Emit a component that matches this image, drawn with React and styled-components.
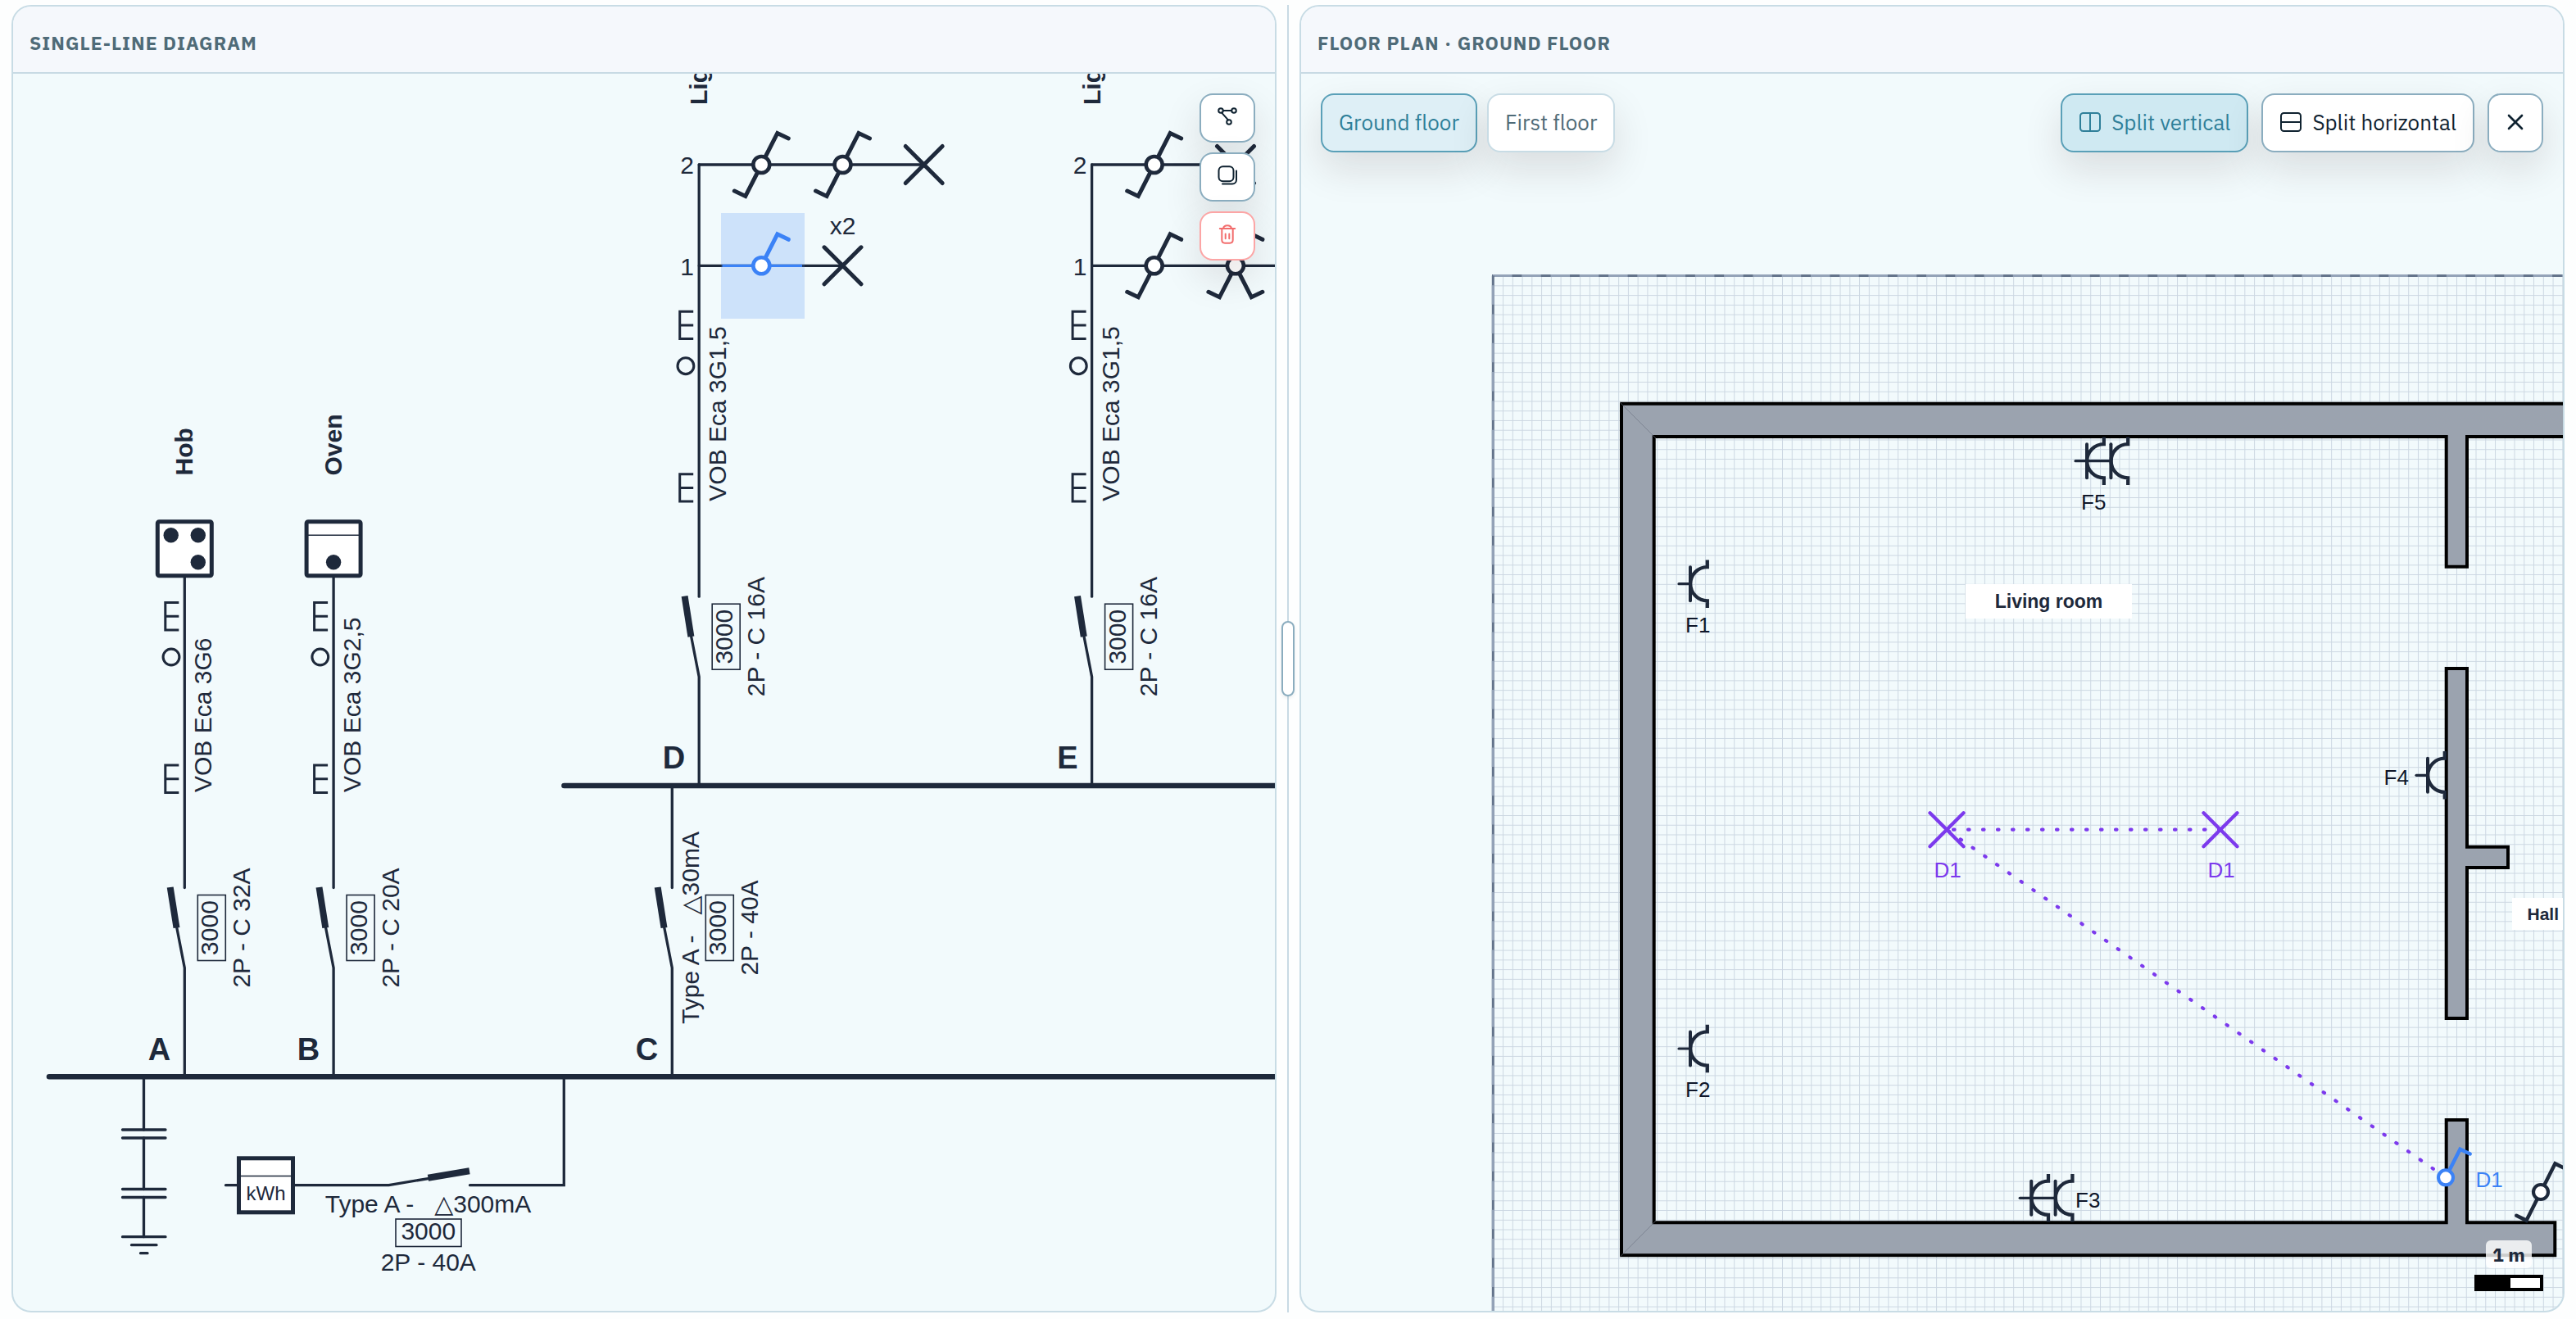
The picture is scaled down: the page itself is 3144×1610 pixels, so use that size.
import React, { useState } from 'react';
import styled, { createGlobalStyle, css } from 'styled-components';
import { X } from 'lucide-react';

const INK = '#1e293b';
const BLUE = '#3b82f6';
const VIOLET = '#7c3aed';

const GlobalStyle = createGlobalStyle`
  * {
    box-sizing: border-box;
  }
  body {
    margin: 0;
    background: #fdfefe;
    font-family: "IBM Plex Sans", Roboto, "Noto Sans", sans-serif;
    color: #0f2230;
  }
`;

/* ---------- single-line diagram symbols ---------- */

const Switch = ({ x, y, arms = ['ur', 'dl'], color = INK, scale = 1 }) => {
  const flip = { ur: '1 1', ul: '-1 1', dr: '1 -1', dl: '-1 -1' };
  return (
    <g transform={`translate(${x} ${y}) scale(${scale})`} stroke={color} strokeWidth="5" fill="none" strokeLinecap="round">
      {arms.map((arm) => (
        <path key={arm} d="M4.5 -9 L19.5 -38.5 L33 -32" transform={`scale(${flip[arm]})`} />
      ))}
      <circle r="10" fill="#fff" strokeWidth="4.6" />
    </g>
  );
};

const Lamp = ({ x, y, size = 22.5, color = INK, width = 5 }) => (
  <path
    d={`M${x - size} ${y - size} L${x + size} ${y + size} M${x + size} ${y - size} L${x - size} ${y + size}`}
    stroke={color}
    strokeWidth={width}
    strokeLinecap="round"
    fill="none"
  />
);

// x is the conductor, y the bus bar the circuit starts from
const Breaker = ({ x, y, rating, differential }) => {
  const shift = differential ? 25 : 0;
  const mid = y - 181.5;
  return (
    <g>
      <Wire d={`M${x} ${y} V${y - 132.5} L${x - 9.5} ${mid}`} />
      <Blade d={`M${x - 9.8} ${mid} L${x - 17.6} ${y - 231}`} />
      {differential && (
        <Label transform={`translate(${x + 33} ${mid}) rotate(-90)`} textAnchor="middle">
          {`Type A -\u00a0\u00a0\u00a0`}<Delta>△</Delta>{differential}
        </Label>
      )}
      <ThinRect x={x + 16 + shift} y={mid - 40} width="34" height="80" />
      <Label transform={`translate(${x + 41 + shift} ${mid}) rotate(-90)`} textAnchor="middle">3000</Label>
      <Label transform={`translate(${x + 79.5 + shift} ${mid}) rotate(-90)`} textAnchor="middle">{rating}</Label>
    </g>
  );
};

const WallMark = ({ x, y }) => (
  <path d={`M${x} ${y} H${x - 16.5} V${y + 33.4} H${x} M${x - 16.5} ${y + 16.7} H${x}`} stroke={INK} strokeWidth="3" fill="none" />
);

const Circuit = ({ x, y, name, rating, cable, top }) => (
  <g>
    <Wire d={`M${x} ${y - 230.5} V${top}`} />
    <Breaker x={x} y={y} rating={rating} />
    <CircuitName x={x - 17} y={y - 20.5} textAnchor="end">{name}</CircuitName>
    <WallMark x={x - 7} y={y - 578.5} />
    <circle cx={x - 16.3} cy={y - 512} r="9.9" fill="none" stroke={INK} strokeWidth="3.1" />
    <WallMark x={x - 7} y={y - 380} />
    <Label transform={`translate(${x + 33} ${y - 347}) rotate(-90)`}>{cable}</Label>
  </g>
);

const SingleLineDiagram = () => (
  <Drawing role="img" aria-label="Single-line diagram">
    <g transform="translate(-16 -90)">
      {/* bus bars */}
      <Bus d="M60 1314.3 H1700" />
      <Bus d="M688.5 959 H1700" />

      {/* earth */}
      <Wire d="M175.5 1314 V1379 M175.5 1389 V1451.5 M175.5 1461.5 V1509.7" />
      <Wire d="M149.5 1379 H202 M149.5 1389 H202 M149.5 1451.5 H202 M149.5 1461.5 H202 M149.5 1509.7 H202 M160.5 1519.7 H191 M171.5 1529.7 H180" />

      {/* meter and main switch */}
      <Wire d="M275.5 1446.7 H474.5 L524 1438.3 M573.5 1446.7 H688.3 V1314" />
      <Blade d="M522.5 1437.7 L573 1429.2" />
      <rect x="291.5" y="1413.8" width="66" height="66" fill="#fff" stroke={INK} strokeWidth="5" />
      <path d="M291.5 1435.5 H357.5" stroke={INK} strokeWidth="1.6" />
      <MeterText x="324.5" y="1465" textAnchor="middle">kWh</MeterText>
      <Label x="522.5" y="1480" textAnchor="middle">
        {`Type A -\u00a0\u00a0\u00a0`}<Delta>△</Delta>300mA
      </Label>
      <ThinRect x="483" y="1488" width="80" height="33.5" />
      <Label x="522.8" y="1512.8" textAnchor="middle">3000</Label>
      <Label x="522.8" y="1551" textAnchor="middle">2P - 40A</Label>

      {/* A - hob */}
      <Circuit x={225.3} y={1314} name="A" rating="2P - C 32A" cable="VOB Eca 3G6" top={705} />
      <rect x="192.3" y="636.7" width="66" height="66" rx="2" fill="#fff" stroke={INK} strokeWidth="5" />
      <circle cx="208.7" cy="653.2" r="9.2" fill={INK} />
      <circle cx="241.8" cy="653.2" r="9.2" fill={INK} />
      <circle cx="241.8" cy="686.2" r="9.2" fill={INK} />
      <BoldLabel transform="translate(235.3 580.5) rotate(-90)">Hob</BoldLabel>

      {/* B - oven */}
      <Circuit x={407.1} y={1314} name="B" rating="2P - C 20A" cable="VOB Eca 3G2,5" top={705} />
      <rect x="374.1" y="636.7" width="66" height="66" rx="2" fill="#fff" stroke={INK} strokeWidth="5" />
      <path d="M374 653.2 H440" stroke={INK} strokeWidth="1.6" />
      <circle cx="407.1" cy="686.2" r="9.2" fill={INK} />
      <BoldLabel transform="translate(417.1 580.5) rotate(-90)">Oven</BoldLabel>

      {/* C - feeds the upper board */}
      <Wire d="M820.3 1083.5 V959" />
      <Breaker x={820.3} y={1314} rating="2P - 40A" differential="30mA" />
      <CircuitName x="803.3" y="1293.5" textAnchor="end">C</CircuitName>

      {/* D */}
      <Circuit x={853.2} y={958.7} name="D" rating="2P - C 16A" cable="VOB Eca 3G1,5" top={201} />
      <Wire d="M853.2 201 H1127.5 M853.2 324.3 H1028.6" />
      <Label x="847" y="212.3" textAnchor="end">2</Label>
      <Label x="847" y="335.7" textAnchor="end">1</Label>
      <Switch x={929.3} y={201} />
      <Switch x={1028.5} y={201} />
      <Lamp x={1127.7} y={201} />
      <Lamp x={1028.5} y={324.3} />
      <Label x="1028.5" y="286" textAnchor="middle">x2</Label>
      <rect x="880" y="260" width="102" height="129" fill={BLUE} fillOpacity="0.2" />
      <path d="M881.5 324.3 H979" stroke={BLUE} strokeWidth="3.3" />
      <Switch x={929.3} y={324.3} arms={['ur']} color={BLUE} />
      <BoldLabel transform="translate(863.2 128) rotate(-90)">Lig</BoldLabel>

      {/* E */}
      <Circuit x={1332.6} y={958.7} name="E" rating="2P - C 16A" cable="VOB Eca 3G1,5" top={201} />
      <Wire d="M1332.6 201 H1508 M1332.6 324.3 H1700" />
      <Label x="1326.4" y="212.3" textAnchor="end">2</Label>
      <Label x="1326.4" y="335.7" textAnchor="end">1</Label>
      <Switch x={1408.7} y={201} />
      <Lamp x={1508} y={201} />
      <Switch x={1408.7} y={324.3} />
      <Switch x={1507.9} y={324.3} arms={['ur', 'ul', 'dr', 'dl']} />
      <BoldLabel transform="translate(1342.6 128) rotate(-90)">Lig</BoldLabel>
    </g>
  </Drawing>
);

/* ---------- floor plan ---------- */

const Socket = ({ x, y, count = 1 }) => {
  const step = 29.4;
  return (
    <g transform={`translate(${x} ${y})`} stroke={INK} fill="none">
      <path d={`M-14 0 H${(count - 1) * step}`} strokeWidth="3.2" strokeLinecap="round" />
      {Array.from({ length: count }, (_, i) => (
        <g key={i} transform={`translate(${i * step} 0)`}>
          <path d="M0 -20.5 V20.5" strokeWidth="4" strokeLinecap="round" />
          <path d="M20.8 -29.3 V-20.6 A20.6 20.6 0 0 0 20.8 20.6 V29.3" strokeWidth="4.3" />
        </g>
      ))}
    </g>
  );
};

const walls = [
  'M3300 492.7 H1979 V1532.3 H3118.3 V1492.3 H3011 V1367 H2985.7 V1492.3 H2018.7 V533 H2985.7 V691.7 H3011 V533 H3300 Z',
  'M2985.7 816 H3011 V1033.7 H3061 V1059 H3011 V1243 H2985.7 Z',
];

const FloorPlan = () => (
  <Drawing role="img" aria-label="Floor plan, ground floor">
    <defs>
      <pattern id="grid" x="1822.3" y="336.6" width="11.757" height="11.757" patternUnits="userSpaceOnUse">
        <path d="M0 0 H11.757 M0 0 V11.757" stroke="#ccd7e2" strokeWidth="2" fill="none" />
      </pattern>
    </defs>
    <g transform="translate(-1588 -90)">
      <rect x="1822.3" y="336.6" width="2000" height="2000" fill="url(#grid)" />
      <path d="M1821 336.5 H3900" stroke="#64748b" strokeWidth="3" />
      <path d="M1822 336.5 H3900" stroke="#94a3b8" strokeWidth="3" strokeDasharray="23.51 11.757" />
      <path d="M1822.3 336.6 V2300" stroke="#64748b" strokeWidth="3" />
      <path d="M1822.3 348.3 V2300" stroke="#94a3b8" strokeWidth="3" strokeDasharray="23.51 11.757" />

      {walls.map((d) => (
        <path key={d} d={d} fill="#9ba3af" stroke="#000" strokeWidth="4" />
      ))}
      <path d="M1977 491 L2021 535 M1977 1534.3 L2021 1490" stroke="#6b7280" strokeWidth="1" strokeOpacity="0.6" />

      <Socket x={2063} y={712.7} />
      <PlanText x="2057" y="772">F1</PlanText>
      <Socket x={2063} y={1280} />
      <PlanText x="2057" y="1339">F2</PlanText>
      <Socket x={2479.2} y={1462.3} count={2} />
      <PlanText x="2533" y="1473.7">F3</PlanText>
      <Socket x={2963} y={946.3} />
      <PlanText x="2909.5" y="957.7">F4</PlanText>
      <Socket x={2547} y={562.7} count={2} />
      <PlanText x="2540" y="622">F5</PlanText>

      <rect x="2399" y="713" width="203" height="42" fill="#fff" />
      <RoomName x="2500.5" y="742" textAnchor="middle">Living room</RoomName>
      <rect x="3066" y="1096" width="120" height="39" fill="#fff" />
      <RoomName $small x="3084.5" y="1122.7">Hall</RoomName>

      <Lamp x={2376} y={1012.7} size={20.5} width={4.3} color={VIOLET} />
      <Lamp x={2710} y={1012.7} size={20.5} width={4.3} color={VIOLET} />
      <path
        d="M2710 1012.7 H2376 M2985 1437.3 L2376 1012.7"
        stroke={VIOLET}
        strokeWidth="4.2"
        strokeLinecap="round"
        strokeDasharray="1.5 16.5"
        strokeDashoffset="-0.5"
      />
      <PlanText x="2377" y="1070.7" textAnchor="middle" fill={VIOLET}>D1</PlanText>
      <PlanText x="2711" y="1070.7" textAnchor="middle" fill={VIOLET}>D1</PlanText>

      <Switch x={2985} y={1437.3} arms={['ur']} color={BLUE} scale={0.9} />
      <PlanText x="3021.5" y="1449" fill={BLUE}>D1</PlanText>
      <Switch x={3101} y={1455} scale={0.9} />
    </g>
  </Drawing>
);

/* ---------- icons ---------- */

const Icon = ({ children }) => (
  <svg width="28" height="28" viewBox="0 0 28 28" fill="none" stroke="currentColor" strokeWidth="2" strokeLinecap="round" strokeLinejoin="round" aria-hidden="true">
    {children}
  </svg>
);

const SplitVerticalIcon = () => (
  <Icon>
    <rect x="2" y="3" width="24" height="22" rx="3.5" />
    <path d="M14 3 V25" />
  </Icon>
);

const SplitHorizontalIcon = () => (
  <Icon>
    <rect x="2" y="3" width="24" height="22" rx="3.5" />
    <path d="M2 14 H26" />
  </Icon>
);

const LinkIcon = () => (
  <Icon>
    <circle cx="6" cy="5" r="2.8" />
    <circle cx="22" cy="5" r="2.8" />
    <circle cx="16" cy="19" r="2.8" />
    <path d="M8.8 5 H19.2 M7.1 7.6 L14.9 16.4" />
  </Icon>
);

const CopyIcon = () => (
  <Icon>
    <rect x="3.5" y="1.2" width="18" height="18" rx="5" />
    <path d="M25 6.5 V17.5 A5 5 0 0 1 20 22.5 H8" />
  </Icon>
);

const TrashIcon = () => (
  <Icon>
    <path d="M4.8 5 H23.2 M9 5 C9.6 0 18.4 0 19 5 M7.3 5 V19 A3.8 3.8 0 0 0 11 22.7 H17 A3.8 3.8 0 0 0 20.7 19 V5 M11.7 11.5 V17.2 M16.3 11.5 V17.2" />
  </Icon>
);

/* ---------- app ---------- */

const floors = ['Ground floor', 'First floor'];

const App = () => {
  const [floor, setFloor] = useState('Ground floor');
  const [split, setSplit] = useState('vertical');

  return (
    <>
      <GlobalStyle />
      <STWorkspace>
        <STPanel>
          <STHeader>
            <STTitle>Single-line diagram</STTitle>
          </STHeader>
          <STCanvas>
            <SingleLineDiagram />
            <STTools>
              <ToolButton type="button" aria-label="Show links"><LinkIcon /></ToolButton>
              <ToolButton type="button" aria-label="Duplicate"><CopyIcon /></ToolButton>
              <ToolButton type="button" aria-label="Delete" $danger><TrashIcon /></ToolButton>
            </STTools>
          </STCanvas>
        </STPanel>

        <STDivider role="separator" aria-orientation="vertical">
          <STHandle />
        </STDivider>

        <STPanel>
          <STHeader>
            <STTitle>Floor plan · {floor}</STTitle>
          </STHeader>
          <STCanvas>
            <FloorPlan />
            <STBar>
              <STFloors>
                {floors.map((name) => (
                  <FloorButton key={name} type="button" $active={floor === name} onClick={() => setFloor(name)}>
                    {name}
                  </FloorButton>
                ))}
              </STFloors>
              <STActions>
                <ActionButton type="button" $active={split === 'vertical'} onClick={() => setSplit('vertical')}>
                  <SplitVerticalIcon />
                  Split vertical
                </ActionButton>
                <ActionButton type="button" $active={split === 'horizontal'} onClick={() => setSplit('horizontal')}>
                  <SplitHorizontalIcon />
                  Split horizontal
                </ActionButton>
                <CloseButton type="button" aria-label="Close">
                  <X size={32} />
                </CloseButton>
              </STActions>
            </STBar>
            <STScale>
              <STScaleText>1 m</STScaleText>
              <STScaleBar />
            </STScale>
          </STCanvas>
        </STPanel>
      </STWorkspace>
    </>
  );
};

const STWorkspace = styled.main`
  display: grid;
  grid-template-columns: minmax(0, 1fr) 28px minmax(0, 1fr);
  height: 100vh;
  padding: 6px 14px 8px;
`;

const STPanel = styled.section`
  display: flex;
  flex-direction: column;
  min-height: 0;
  border: 2px solid #c8dce5;
  border-radius: 24px;
  background: #f2fafc;
  overflow: hidden;
`;

const STHeader = styled.header`
  padding: 28px 20px 20px;
  border-bottom: 2px solid #c8dae4;
  background: #f5f8fc;
`;

const STTitle = styled.h2`
  margin: 0;
  font-size: 23px;
  line-height: 32px;
  font-weight: 700;
  letter-spacing: 1px;
  text-transform: uppercase;
  color: #4f6b78;
`;

const STCanvas = styled.div`
  position: relative;
  flex: 1;
  min-height: 0;
  overflow: hidden;
`;

const STDivider = styled.div`
  display: flex;
  align-items: center;
  justify-content: center;
  background: linear-gradient(#c8dae4, #c8dae4) center / 2px 100% no-repeat;
  cursor: col-resize;
`;

const STHandle = styled.span`
  width: 16px;
  height: 92px;
  border: 2px solid #8badbf;
  border-radius: 8px;
  background: #fff;
  box-shadow: 0 2px 4px rgba(15, 34, 48, 0.08);
`;

/* toolbars float over the drawings */
const STTools = styled.div`
  position: absolute;
  top: 24px;
  right: 24px;
  display: flex;
  flex-direction: column;
  gap: 12px;
`;

const STBar = styled.div`
  position: absolute;
  top: 24px;
  left: 24px;
  right: 24px;
  display: flex;
  justify-content: space-between;
`;

const STFloors = styled.div`
  display: flex;
  gap: 12px;
`;

const STActions = styled.div`
  display: flex;
  gap: 16px;
`;

const Button = styled.button`
  display: flex;
  align-items: center;
  justify-content: center;
  gap: 12px;
  height: 72px;
  padding: 0 20px 2px;
  border: 2px solid #8badbf;
  border-radius: 16px;
  background: #fff;
  box-shadow: 0 20px 48px rgba(40, 20, 20, 0.12);
  font-family: inherit;
  font-size: 26px;
  line-height: 32px;
  color: #0f2230;
  white-space: nowrap;
  cursor: pointer;
`;

const FloorButton = styled(Button)`
  border-color: #c8dce5;
  color: #4f6b78;
  ${({ $active }) => $active && css`
    border-color: #5aa0b8;
    background: #deeff6;
    color: #2f7f99;
  `}
`;

const ActionButton = styled(Button)`
  ${({ $active }) => $active && css`
    border-color: #5aa0b8;
    background: #cfe9f2;
    color: #2f7f99;
  `}
`;

const CloseButton = styled(Button)`
  padding: 0 16px 2px;
`;

const ToolButton = styled(Button)`
  width: 68px;
  height: 60px;
  padding: 0;
  ${({ $danger }) => $danger && css`
    border-color: #fca5a5;
    color: #f26d6d;
  `}
`;

const STScale = styled.div`
  position: absolute;
  right: 24px;
  bottom: 24px;
  display: flex;
  flex-direction: column;
  align-items: center;
  gap: 8px;
`;

const STScaleText = styled.span`
  padding: 0 8px;
  border-radius: 6px;
  background: rgba(255, 255, 255, 0.8);
  font-size: 23px;
  line-height: 34px;
  font-weight: 700;
  color: ${INK};
`;

const STScaleBar = styled.div`
  width: 84px;
  height: 20px;
  border: 4px solid #000;
  background: linear-gradient(90deg, #000 40px, #fff 40px);
`;

const Drawing = styled.svg`
  display: block;
  width: 100%;
  height: 100%;
  font-family: "Liberation Sans", Arial, sans-serif;
`;

const Wire = styled.path`
  fill: none;
  stroke: ${INK};
  stroke-width: 3.3px;
  stroke-linecap: round;
`;

const Bus = styled.path`
  stroke: ${INK};
  stroke-width: 6.6px;
  stroke-linecap: round;
`;

const Blade = styled.path`
  stroke: ${INK};
  stroke-width: 8px;
`;

const ThinRect = styled.rect`
  fill: none;
  stroke: ${INK};
  stroke-width: 1.6px;
`;

const Label = styled.text`
  font-size: 30px;
  fill: ${INK};
`;

const Delta = styled.tspan`
  font-family: "DejaVu Sans", sans-serif;
`;

const BoldLabel = styled(Label)`
  font-weight: 700;
`;

const MeterText = styled(Label)`
  font-size: 24px;
`;

const CircuitName = styled(BoldLabel)`
  font-size: 38px;
`;

const PlanText = styled.text`
  font-size: 26px;
  fill: ${({ fill }) => fill || '#0f172a'};
`;

const RoomName = styled.text`
  font-size: ${({ $small }) => ($small ? '21px' : '23px')};
  font-weight: 700;
  fill: ${INK};
`;

export default App;
